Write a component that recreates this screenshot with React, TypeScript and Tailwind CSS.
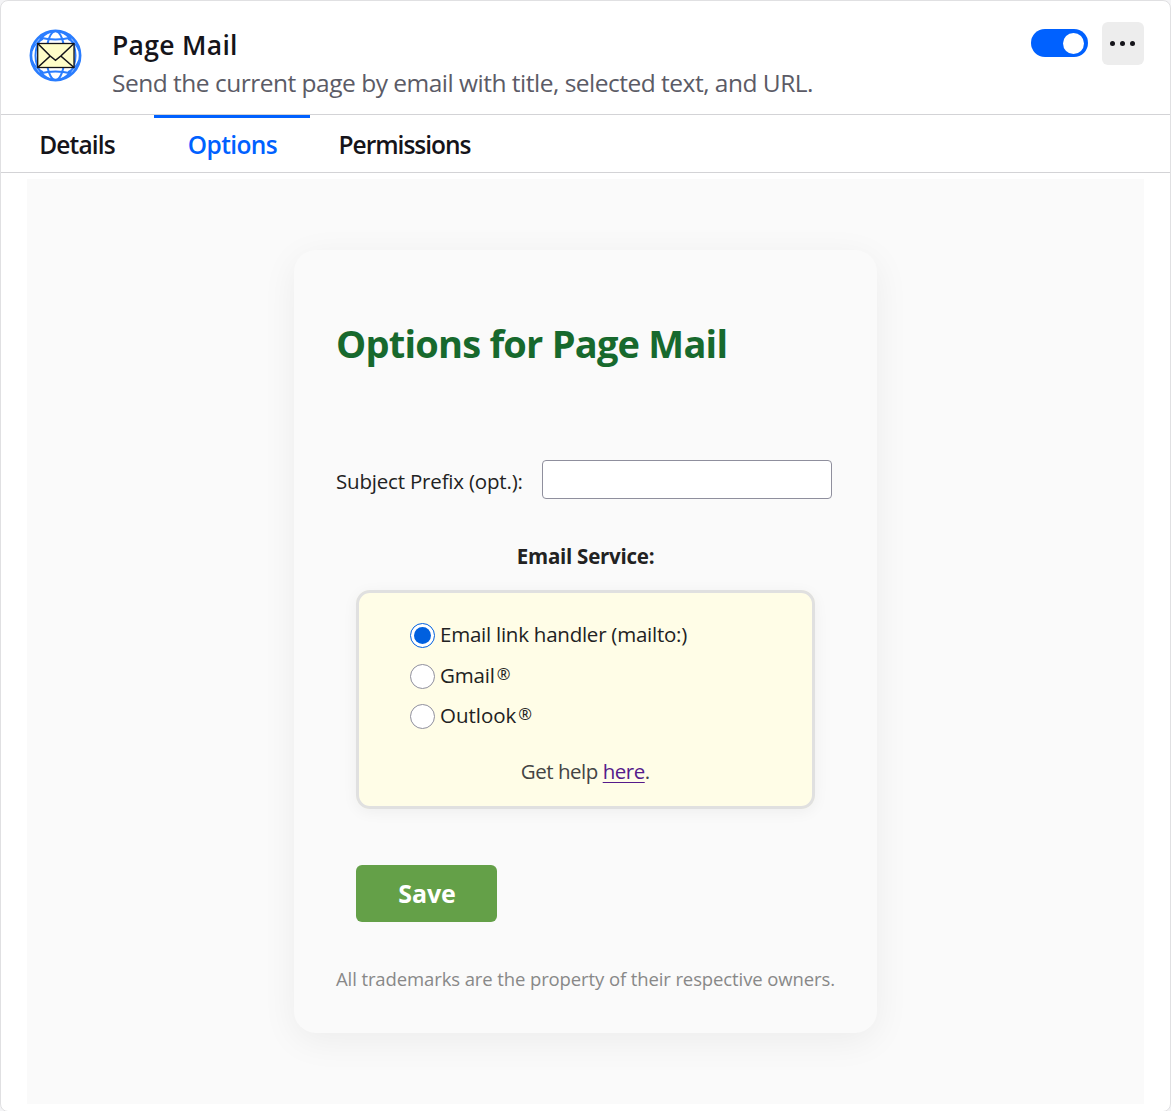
import { useState } from "react";

function PageMailIcon() {
  return (
    <svg width="54" height="54" viewBox="0 0 54 54" fill="none" aria-hidden="true">
      <g stroke="#2a7dff">
        <circle cx="27.500" cy="27.500" r="24.600" strokeWidth="2.700" />
        <ellipse cx="27.500" cy="27.500" rx="20" ry="24.6" strokeWidth="2" />
        <ellipse cx="27.500" cy="27.500" rx="9" ry="24.6" strokeWidth="2" />
        <path d="M11.500 9.500Q27.500 13.500 43.500 9.500M11.500 45.500Q27.500 41.500 43.500 45.500" strokeWidth="2" />
        <path d="M4 23Q6.500 15 15 11M51 23Q48.500 15 40 11M4 32Q6.500 40 15 44M51 32Q48.500 40 40 44" strokeWidth="1.6" />
      </g>
      <rect x="9.700" y="15.500" width="36.300" height="24" fill="#fffdc8" stroke="#14141a" strokeWidth="1.3" />
      <path d="M9.700 15.500L22.200 28L27.500 32.300L32.800 28L46 15.500M9.700 39.500L22.200 28M46 39.500L32.800 28" stroke="#14141a" strokeWidth="1.6" />
    </svg>
  );
}

function Header() {
  const [enabled, setEnabled] = useState(true);
  return (
    <header className="flex h-[114px] shrink-0 items-start border-b border-[#d3d3d6] pl-[27px] pr-[26px]">
      <div className="mt-[27px] shrink-0">
        <PageMailIcon />
      </div>
      <div className="ml-[30px] mt-[26px] flex-1 whitespace-nowrap">
        <h1 className="text-[26.500px] font-semibold leading-9 tracking-[0.3px] text-[#15141a]">Page Mail</h1>
        <p className="mt-[4px] text-[24.500px] leading-8 tracking-[-0.5px] text-[#5b5b66]">
          Send the current page by email with title, selected text, and URL.
        </p>
      </div>
      <button
        role="switch"
        aria-checked={enabled}
        onClick={() => setEnabled(!enabled)}
        className="mt-7 flex h-7 w-[57px] items-center justify-end rounded-full bg-[#0061ff] pr-1"
      >
        <span className="size-[21px] rounded-full bg-white" />
      </button>
      <button aria-label="More options" className="ml-3.5 mt-[21px] flex h-[43px] w-[42px] items-center justify-center gap-[5px] rounded-md bg-[#ededed] pr-px">
        <span className="size-[5px] rounded-full bg-[#15141a]" />
        <span className="size-[5px] rounded-full bg-[#15141a]" />
        <span className="size-[5px] rounded-full bg-[#15141a]" />
      </button>
    </header>
  );
}

function Tabs() {
  return (
    <nav className="flex h-[58px] shrink-0 border-b border-[#d3d3d6] text-center text-[24.500px] font-semibold text-[#15141a]">
      <button className="w-[153px] border-t-[3px] border-transparent pr-px tracking-[-0.85px]">Details</button>
      <button className="w-[156px] border-t-[3px] border-[#0061ff] pl-px tracking-[-0.6px] text-[#0061ff]">Options</button>
      <button className="w-[190px] border-t-[3px] border-transparent pr-px tracking-[-1px]">Permissions</button>
    </nav>
  );
}

function Radio({ checked, onSelect, label, mark, spacing }: { checked: boolean; onSelect: () => void; label: string; mark?: boolean; spacing: string }) {
  return (
    <label className="flex h-[25px] items-center whitespace-nowrap">
      <input type="radio" name="service" checked={checked} onChange={onSelect} className="sr-only" />
      <span className={`flex size-[25px] shrink-0 items-center justify-center rounded-full border bg-white ${checked ? "border-[#0060df]" : "border-[#8f8f9d]"}`}>
        {checked && <span className="size-[17px] rounded-full bg-[#0060df]" />}
      </span>
      <span className={`-mt-[2px] ml-[5px] ${spacing}`}>{label}</span>
      {mark && <span className="-mt-[4px] ml-[2px] text-[16.500px]">®</span>}
    </label>
  );
}

export default function App() {
  const [service, setService] = useState(0);
  return (
    <div className="h-[1111px] w-[1171px] overflow-hidden bg-[#f4f4f6] font-['Open_Sans','Noto_Sans',sans-serif]">
      <main className="flex h-[1112px] flex-col rounded-lg border border-[#e0e0e2] bg-white">
        <Header />
        <Tabs />
        <section className="mx-[26px] mt-[6px] flex h-[925px] shrink-0 items-start justify-center bg-[#fafafa] pt-[71px]">
          <div className="flex h-[783px] w-[583px] flex-col rounded-[22px] bg-[#fafafa] px-[42px] text-[20.500px] text-[#222] shadow-[0_8px_36px_rgba(0,0,0,0.06)]">
            <h2 className="mt-[67px] whitespace-nowrap text-[38px] font-bold leading-[52px] tracking-[-0.78px] text-[#17692d]">Options for Page Mail</h2>
            <div className="mt-[91px] flex h-[39px] items-center">
              <label htmlFor="prefix" className="w-[206px] whitespace-nowrap pt-[4px] tracking-[-0.19px]">Subject Prefix (opt.):</label>
              <input id="prefix" className="h-[39px] w-[290px] rounded border border-[#8f8f9d] bg-white px-2 outline-none" />
            </div>
            <h3 className="mt-[42px] text-center font-bold leading-[30px] tracking-[-0.25px]">Email Service:</h3>
            <fieldset className="ml-5 mt-[19px] flex h-[218.500px] w-[458.500px] flex-col rounded-[14px] border-[3px] border-[#e0e0e0] bg-[#fffde7] pl-[51px] pr-[51px] pt-[30px] shadow-[0_3px_15px_rgba(0,0,0,0.05)]">
              <div className="flex flex-col gap-[15.500px]">
                <Radio checked={service === 0} onSelect={() => setService(0)} label="Email link handler (mailto:)" spacing="tracking-[-0.24px]" />
                <Radio checked={service === 1} onSelect={() => setService(1)} label="Gmail" mark spacing="tracking-[-0.18px]" />
                <Radio checked={service === 2} onSelect={() => setService(2)} label="Outlook" mark spacing="tracking-[-0.02px]" />
              </div>
              <p className="mt-[27px] text-center leading-[30px] tracking-[-0.48px] text-[#444]">
                Get help <a href="#help" className="text-[#551a8b] underline decoration-1 underline-offset-[3px]">here</a>.
              </p>
            </fieldset>
            <button className="ml-5 mt-[56.500px] h-[57px] w-[141px] shrink-0 rounded-md bg-[#64a048] pl-px pt-px text-[25px] font-bold tracking-[-0.15px] text-white">Save</button>
            <p className="mt-[42px] whitespace-nowrap text-[18.500px] leading-[30px] tracking-[-0.11px] text-[#888]">
              All trademarks are the property of their respective owners.
            </p>
          </div>
        </section>
      </main>
    </div>
  );
}
